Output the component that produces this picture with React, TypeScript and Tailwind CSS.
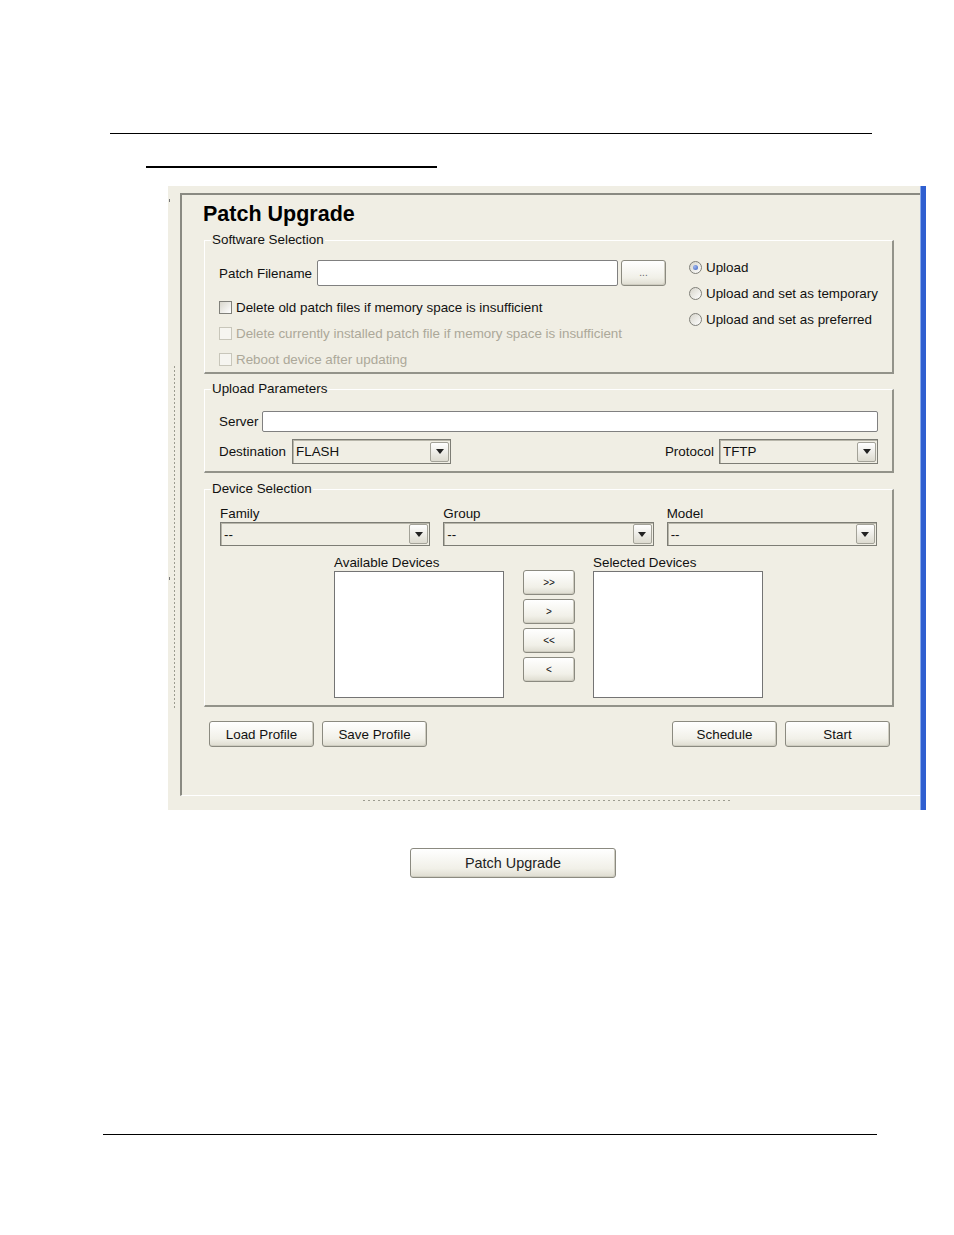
import React from "react";

function Check({ label, disabled }: { label: string; disabled?: boolean }) {
  return (
    <div className="flex h-[26px] items-center">
      <span
        className={
          disabled
            ? "box-border h-[13px] w-[13px] shrink-0 border border-[#c8c6ba] bg-[#f6f5f0]"
            : "box-border h-[13px] w-[13px] shrink-0 border border-[#80807a] bg-[linear-gradient(135deg,#d9d7cd,#ffffff)]"
        }
      />
      <span className={disabled ? "ml-[4px] pt-px text-[#aca899]" : "ml-[4px] pt-px text-[#111]"}>{label}</span>
    </div>
  );
}

function Radio({ label, checked }: { label: string; checked?: boolean }) {
  return (
    <div className="flex h-[26px] items-center">
      <span className="box-border flex h-[13px] w-[13px] shrink-0 items-center justify-center rounded-full border border-[#7f7f78] bg-[linear-gradient(135deg,#d6d4ca,#ffffff)]">
        {checked && <span className="h-[5px] w-[5px] rounded-full bg-[radial-gradient(circle_at_35%_35%,#9db5ee,#3e63c0)]" />}
      </span>
      <span className="ml-[4px] pt-px">{label}</span>
    </div>
  );
}

function Arrow() {
  return (
    <span className="mr-[1px] flex h-[20px] w-[19px] shrink-0 items-center justify-center rounded-[2px] border border-[#a3a298] bg-[linear-gradient(#ffffff,#dddbd0)]">
      <svg width="8" height="5" viewBox="0 0 8 5">
        <path d="M0 0H8L4 5Z" fill="#222" />
      </svg>
    </span>
  );
}

function Combo({ value, className }: { value: string; className: string }) {
  return (
    <div className={"flex items-center border border-[#7d7d75] bg-[#f0eee4] pl-[3px] shadow-[inset_1px_1px_0_#b8b6aa] " + className}>
      <span className="flex-1 truncate pt-px">{value}</span>
      <Arrow />
    </div>
  );
}

function Btn({ children, className }: { children: React.ReactNode; className: string }) {
  return (
    <div
      className={
        "flex items-center justify-center rounded-[3px] border border-[#8b8a80] bg-[linear-gradient(#ffffff,#f1f0e8_70%,#dedcd0)] shadow-[inset_-1px_-1px_0_#cfcdc1] " +
        className
      }
    >
      {children}
    </div>
  );
}

export default function App() {
  return (
    <div className="min-h-[1235px] w-[954px] bg-white font-['Liberation_Sans',Arial,sans-serif] text-[13.4px] leading-[16px] text-[#111]">
      <div className="pt-[133px]">
        <div className="ml-[110px] h-px w-[762px] bg-black" />
        <div className="ml-[146px] mt-[32px] h-[2px] w-[291px] bg-black" />

        {/* screenshot */}
        <div className="ml-[168px] mt-[18px] flex h-[624px] w-[758px] bg-[#f0eee4]">
          {/* left strip */}
          <div className="flex w-[12px]">
            <div className="flex w-[2px] flex-col">
              <div className="ml-[1px] mt-[13px] h-[3px] w-px bg-[#777]" />
              <div className="ml-[1px] mt-[375px] h-[3px] w-px bg-[#777]" />
            </div>
            <div className="ml-[4px] mt-[180px] h-[344px] w-px bg-[repeating-linear-gradient(to_bottom,#9c9c90_0px,#9c9c90_2px,transparent_2px,transparent_4px)]" />
          </div>

          {/* main */}
          <div className="flex w-[740px] flex-col">
            <div className="h-[7px]" />
            <div className="flex h-[603px] flex-col border-b border-l-2 border-t-2 border-b-white border-l-[#8a8a82] border-t-[#8a8a82]">
              <div className="ml-[21px] mt-[7px] text-[21.5px] font-bold leading-[24px] text-black">Patch Upgrade</div>

              {/* Software Selection */}
              <fieldset className="ml-[22px] mt-[6px] w-[690px] border-b-2 border-l border-r-2 border-t border-b-[#93938a] border-l-white border-r-[#93938a] border-t-white">
                <legend className="ml-[6px] px-px leading-[16px]">Software Selection</legend>
                <div className="flex">
                  <div className="w-[461px] pl-[14px] pt-[12px]">
                    <div className="flex h-[26px] items-center">
                      <span className="w-[98px] pt-px">Patch Filename</span>
                      <div className="h-[26px] w-[301px] rounded-[2px] border border-[#808080] bg-white" />
                      <Btn className="ml-[3px] h-[26px] w-[45px] text-[10px] text-[#666]">...</Btn>
                    </div>
                    <div className="mt-[8px]">
                      <Check label="Delete old patch files if memory space is insufficient" />
                      <Check label="Delete currently installed patch file if memory space is insufficient" disabled />
                      <Check label="Reboot device after updating" disabled />
                    </div>
                  </div>
                  <div className="ml-[23px] pt-[6px]">
                    <Radio label="Upload" checked />
                    <Radio label="Upload and set as temporary" />
                    <Radio label="Upload and set as preferred" />
                  </div>
                </div>
              </fieldset>

              {/* Upload Parameters */}
              <fieldset className="ml-[22px] mt-[7px] w-[690px] border-b-2 border-l border-r-2 border-t border-b-[#93938a] border-l-white border-r-[#93938a] border-t-white">
                <legend className="ml-[6px] px-px leading-[16px]">Upload Parameters</legend>
                <div className="pb-[7px] pl-[14px] pr-[14px] pt-[13px]">
                  <div className="flex h-[23px] items-center">
                    <span className="w-[43px] pt-px">Server</span>
                    <div className="h-[21px] flex-1 rounded-[2px] border border-[#808080] bg-white" />
                  </div>
                  <div className="mt-[6px] flex h-[25px] items-center">
                    <span className="w-[73px] pt-px">Destination</span>
                    <Combo value="FLASH" className="h-[25px] w-[159px]" />
                    <div className="flex-1" />
                    <span className="mr-[5px] pt-px">Protocol</span>
                    <Combo value="TFTP" className="h-[25px] w-[159px]" />
                  </div>
                </div>
              </fieldset>

              {/* Device Selection */}
              <fieldset className="ml-[22px] mt-[8px] w-[690px] border-b-2 border-l border-r-2 border-t border-b-[#93938a] border-l-white border-r-[#93938a] border-t-white">
                <legend className="ml-[6px] px-px leading-[16px]">Device Selection</legend>
                <div className="pb-[7px] pl-[15px] pr-[15px] pt-[8px]">
                  <div className="grid grid-cols-3 gap-x-[13px]">
                    <div>
                      <div className="h-[16px] pt-px">Family</div>
                      <Combo value="--" className="mt-[1px] h-[24px]" />
                    </div>
                    <div>
                      <div className="h-[16px] pt-px">Group</div>
                      <Combo value="--" className="mt-[1px] h-[24px]" />
                    </div>
                    <div>
                      <div className="h-[16px] pt-px">Model</div>
                      <Combo value="--" className="mt-[1px] h-[24px]" />
                    </div>
                  </div>
                  <div className="mt-[8px] flex items-start">
                    <div className="ml-[114px] w-[170px]">
                      <div className="h-[16px] pt-px">Available Devices</div>
                      <div className="mt-[1px] h-[127px] border border-[#747474] bg-white" />
                    </div>
                    <div className="ml-[19px] flex w-[52px] flex-col gap-[4px] pt-[16px] text-[10px]">
                      <Btn className="h-[25px]">&gt;&gt;</Btn>
                      <Btn className="h-[25px]">&gt;</Btn>
                      <Btn className="h-[25px]">&lt;&lt;</Btn>
                      <Btn className="h-[25px]">&lt;</Btn>
                    </div>
                    <div className="ml-[18px] w-[170px]">
                      <div className="h-[16px] pt-px">Selected Devices</div>
                      <div className="mt-[1px] h-[127px] border border-[#747474] bg-white" />
                    </div>
                  </div>
                </div>
              </fieldset>

              <div className="mt-[14px] flex pl-[27px] pr-[30px]">
                <Btn className="h-[26px] w-[105px] pt-px">Load Profile</Btn>
                <Btn className="ml-[8px] h-[26px] w-[105px] pt-px">Save Profile</Btn>
                <div className="flex-1" />
                <Btn className="h-[26px] w-[105px] pt-px">Schedule</Btn>
                <Btn className="ml-[8px] h-[26px] w-[105px] pt-px">Start</Btn>
              </div>
            </div>
            <div className="flex h-[14px] flex-col">
              <div className="ml-[183px] mt-[4px] h-px w-[370px] bg-[repeating-linear-gradient(to_right,#9c9c90_0px,#9c9c90_2px,transparent_2px,transparent_5px)]" />
            </div>
          </div>

          {/* blue edge */}
          <div className="w-[6px] border-l border-l-[#86a8ea] bg-[#2f5fd0]" />
        </div>

        <Btn className="ml-[410px] mt-[38px] h-[30px] w-[206px] text-[14.4px] text-[#222]">Patch Upgrade</Btn>

        <div className="ml-[103px] mt-[256px] h-px w-[774px] bg-black" />
      </div>
    </div>
  );
}
